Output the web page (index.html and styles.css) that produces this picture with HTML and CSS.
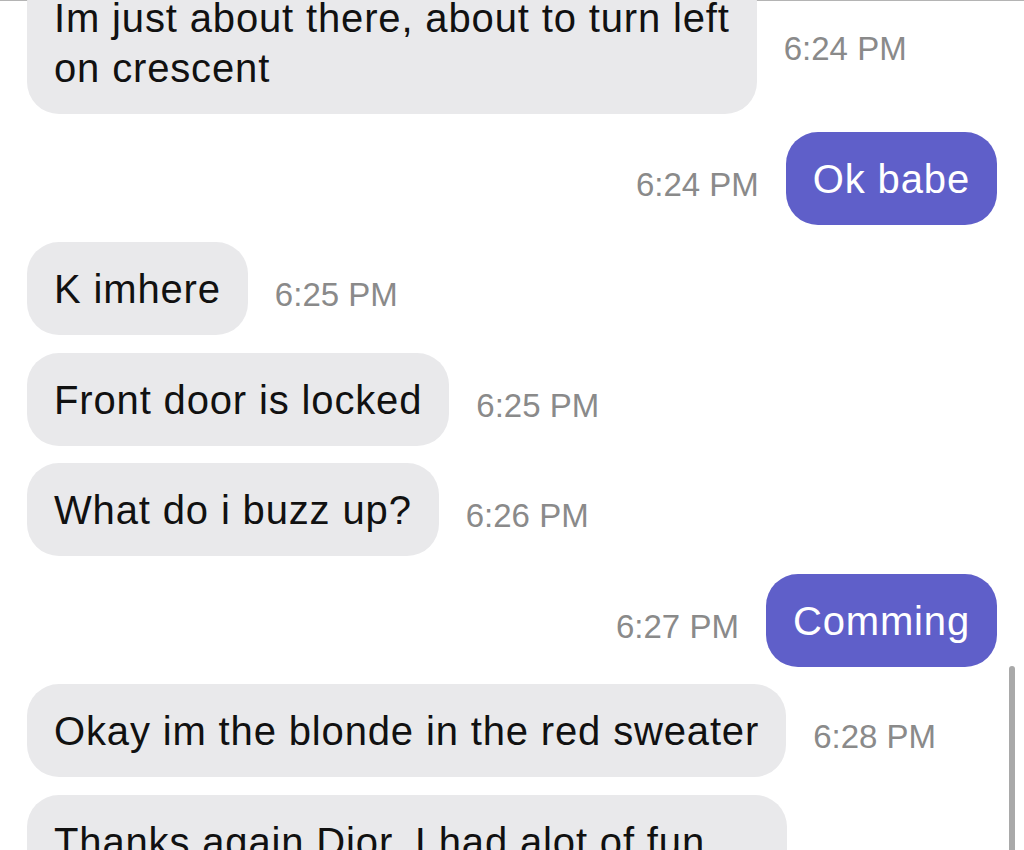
FILE: index.html
```html
<!DOCTYPE html>
<html lang="en">
<head>
    <meta charset="UTF-8">
    <meta name="viewport" content="width=device-width, initial-scale=1.0">
    <title>Messages</title>
    <link rel="stylesheet" href="styles.css">
</head>
<body>
    <div class="screen">
        <div class="topline"></div>
        <div class="thread">
            <div class="row first">
                <div class="bubble in">Im just about there, about to turn left<br>on crescent</div>
                <span class="time">6:24 PM</span>
            </div>

            <div class="row mine">
                <span class="time">6:24 PM</span>
                <div class="bubble out">Ok babe</div>
            </div>

            <div class="row">
                <div class="bubble in">K imhere</div>
                <span class="time">6:25 PM</span>
            </div>

            <div class="row">
                <div class="bubble in">Front door is locked</div>
                <span class="time">6:25 PM</span>
            </div>

            <div class="row">
                <div class="bubble in">What do i buzz up?</div>
                <span class="time">6:26 PM</span>
            </div>

            <div class="row mine">
                <span class="time">6:27 PM</span>
                <div class="bubble out">Comming</div>
            </div>

            <div class="row">
                <div class="bubble in">Okay im the blonde in the red sweater</div>
                <span class="time">6:28 PM</span>
            </div>

            <div class="row">
                <div class="bubble in wrapped">Thanks again Dior. I had alot of fun</div>
            </div>
        </div>
        <div class="scrollbar"></div>
    </div>
</body>
</html>
```

FILE: styles.css
```css
body {
    margin: 0;
    background-color: #ffffff;
    font-family: 'Liberation Sans', Arial, sans-serif;
    overflow: hidden;
}

.screen {
    position: relative;
    height: 850px;
    overflow: hidden;
}

.topline {
    height: 1px;
    background-color: #b4b4b4;
}

.thread {
    display: flex;
    flex-direction: column;
    gap: 17.5px;
    padding: 0 27px;
}

.row {
    display: flex;
    align-items: center;
    gap: 27px;
}

.row.first {
    margin-top: -30px;
}

.row.mine {
    justify-content: flex-end;
}

.bubble {
    font-size: 40px;
    line-height: 50px;
    letter-spacing: 0.85px;
    padding: 22px 27px 21px;
    border-radius: 32px;
    max-width: 790px;
    box-sizing: border-box;
}

.bubble.in {
    background-color: #e9e9eb;
    color: #111111;
}

.bubble.out {
    background-color: #5f5fc9;
    color: #ffffff;
}

.bubble.wrapped {
    width: 760px;
}

.time {
    font-size: 33px;
    line-height: 38px;
    padding-top: 13px;
    color: #8a8a8a;
    white-space: nowrap;
}

/* Scroll indicator */
.scrollbar {
    position: absolute;
    right: 9px;
    top: 666px;
    width: 6px;
    height: 200px;
    border-radius: 3px;
    background-color: #a9a9a9;
}
```
